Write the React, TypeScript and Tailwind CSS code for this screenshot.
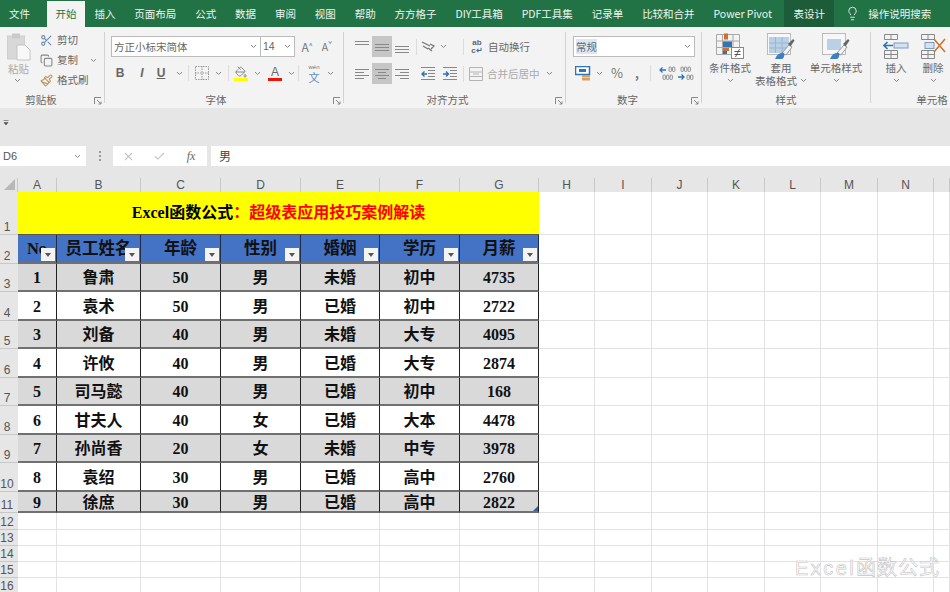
import React from 'react';
import { Scissors, Copy, Paintbrush, PaintBucket, Lightbulb, Check, X } from 'lucide-react';

const cjk = '"Noto Sans CJK SC", "Liberation Sans", sans-serif';
const serif = '"Liberation Serif", "Noto Sans CJK SC", serif';
const sans = '"Liberation Sans", sans-serif';

const tabs = ['插入', '页面布局', '公式', '数据', '审阅', '视图', '帮助', '方方格子', 'DIY工具箱', 'PDF工具集', '记录单', '比较和合并', 'Power Pivot'];

const colWidths = [39, 84, 80, 80, 79, 80, 79, 56, 57, 56, 57, 56, 57, 56, 16];
const colNames = ['A', 'B', 'C', 'D', 'E', 'F', 'G', 'H', 'I', 'J', 'K', 'L', 'M', 'N', ''];
const rowHeights = [43, 29, 28, 29, 28, 29, 28, 29, 28, 29, 21, 17, 16, 16, 16, 16];

const headers = ['No', '员工姓名', '年龄', '性别', '婚姻', '学历', '月薪'];
const people = [
  ['1', '鲁肃', '50', '男', '未婚', '初中', '4735'],
  ['2', '袁术', '50', '男', '已婚', '初中', '2722'],
  ['3', '刘备', '40', '男', '未婚', '大专', '4095'],
  ['4', '许攸', '40', '男', '已婚', '大专', '2874'],
  ['5', '司马懿', '40', '男', '已婚', '初中', '168'],
  ['6', '甘夫人', '40', '女', '已婚', '大本', '4478'],
  ['7', '孙尚香', '20', '女', '未婚', '中专', '3978'],
  ['8', '袁绍', '30', '男', '已婚', '高中', '2760'],
  ['9', '徐庶', '30', '男', '已婚', '高中', '2822'],
];

const Chev = ({ className = '' }: { className?: string }) => (
  <svg width="7" height="5" viewBox="0 0 7 5" className={className}>
    <path d="M1 1l2.5 2.5L6 1" fill="none" stroke="#888" strokeWidth="1" />
  </svg>
);

const Launcher = () => (
  <svg width="8" height="8" viewBox="0 0 8 8" className="shrink-0">
    <path d="M0.5 7V0.5H7M3 3l4 4M7 4.5V7H4.5" fill="none" stroke="#888" strokeWidth="1" />
  </svg>
);

// three or four short rules used by the alignment buttons
const Lines = ({ rows, y = 2, gap = 3 }: { rows: number[][]; y?: number; gap?: number }) => (
  <svg width="14" height="14" viewBox="0 0 14 14">
    {rows.map((r, i) => (
      <line key={i} x1={r[0]} x2={r[1]} y1={y + i * gap + 0.5} y2={y + i * gap + 0.5} stroke="#888" strokeWidth="1" />
    ))}
  </svg>
);

const Indent = ({ flip }: { flip?: boolean }) => (
  <svg width="14" height="14" viewBox="0 0 14 14">
    {[1, 4, 7, 10, 13].map(y => (
      <line key={y} x1={y === 1 || y === 13 ? 0 : 7} x2="14" y1={y - 0.5} y2={y - 0.5} stroke="#888" strokeWidth="1" />
    ))}
    <path d={flip ? 'M0 7h5M3 4.5L5.5 7 3 9.5' : 'M6 7H1M3.5 4.5L1 7l2.5 2.5'} fill="none" stroke="#2f6fb5" strokeWidth="1.4" />
  </svg>
);

const Group = ({ width, label, launcher, labelClass = '', children }: { width: string; label: string; launcher?: boolean; labelClass?: string; children: React.ReactNode }) => (
  <div className={`${width} shrink-0 flex flex-col`}>
    <div className="h-[66px] overflow-hidden">{children}</div>
    <div className="h-[15px] flex items-center">
      <span className={`flex-1 text-center text-[#666] text-[10.5px] leading-none ${labelClass}`}>{label}</span>
      {launcher && <span className="w-[14px] flex justify-end pr-[2px]"><Launcher /></span>}
    </div>
  </div>
);

const Divider = () => <div className="w-px my-[5px] bg-[#d2d2d2] shrink-0" />;

const Sep = ({ className = '' }: { className?: string }) => <div className={`w-px h-[16px] bg-[#dcdcdc] shrink-0 ${className}`} />;

const Slot = ({ w, children, className = '' }: { w: string; children?: React.ReactNode; className?: string }) => (
  <div className={`${w} shrink-0 flex items-center justify-center ${className}`}>{children}</div>
);

const Clipboard = () => (
  <svg width="25" height="28" viewBox="0 0 25 28">
    <rect x="0.5" y="3" width="17" height="23" fill="#d8d8d8" stroke="#cfcfcf" />
    <rect x="5" y="0.5" width="8" height="5" fill="#c9c9c9" />
    <path d="M10 12h8l5 5v10H10z" fill="#f8f8f8" stroke="#c4c4c4" />
  </svg>
);

const Borders = () => (
  <svg width="14" height="14" viewBox="0 0 14 14">
    <path d="M0.5 0.5h13v13h-13zM7 0v14M0 7h14" fill="none" stroke="#999" strokeWidth="1" strokeDasharray="1.5 1" />
  </svg>
);

const CondFormat = () => (
  <svg width="28" height="26" viewBox="0 0 28 26">
    <path d="M0.5 1.5h23v20h-23zM6.5 1.5v20M17 1.5v20M0.5 8h23M0.5 14.5h23" fill="none" stroke="#a8a8a8" />
    <rect x="8" y="0.5" width="4" height="6" fill="#d0702c" />
    <rect x="7" y="8.5" width="9" height="5.5" fill="#2f75b5" />
    <rect x="7" y="15" width="6" height="3" fill="#d0702c" />
    <rect x="7" y="18" width="4" height="3" fill="#2f75b5" />
    <rect x="15.5" y="14.5" width="12" height="11" fill="#fff" stroke="#888" />
    <path d="M18.5 18.5h6M18.5 21.5h6M23.5 16l-4 8" fill="none" stroke="#555" />
  </svg>
);

const TableStyle = ({ light }: { light?: boolean }) => (
  <svg width="28" height="26" viewBox="0 0 28 26">
    <rect x="0.5" y="0.5" width="23" height="21" fill="#f7f7f7" stroke="#bbb" />
    <rect x={light ? 5 : 2} y={light ? 6 : 4} width={light ? 14 : 20} height={light ? 11 : 16} fill="#b9d0e6" />
    {!light && <path d="M8.5 4v16M15 4v16M2 10h20M2 15h20" stroke="#9ab6cf" />}
    <path d="M15 20l7-8 3 2-6 8z" fill="#f4f4f4" stroke="#999" />
    <path d="M21 11l5-5 1.5 1.5-4 6z" fill="#666" />
    <path d="M8 26c2-5 6-7 9-6 1 3-1 6-2 6z" fill="#3b7fc4" />
  </svg>
);

const InsertCells = () => (
  <svg width="26" height="26" viewBox="0 0 26 26">
    <path d="M1.5 1.5h13v5h-13zM8 1.5v5M1.5 17.5h13v8h-13zM8 17.5v8M1.5 21.5h13" fill="none" stroke="#888" />
    <rect x="11" y="10" width="14" height="5" fill="#d4e2f0" stroke="#7b9cc0" />
    <path d="M10 12.5H1M4.5 9L1 12.5 4.5 16" fill="none" stroke="#2f75b5" strokeWidth="1.6" />
  </svg>
);

const DeleteCells = () => (
  <svg width="26" height="26" viewBox="0 0 26 26">
    <path d="M1.5 1.5h13v5h-13zM8 1.5v5M1.5 17.5h13v8h-13zM8 17.5v8M1.5 21.5h13" fill="none" stroke="#888" />
    <rect x="5" y="9.5" width="9" height="6" fill="#d4e2f0" stroke="#7b9cc0" />
    <path d="M14 6l11 13M25 6L14 19" fill="none" stroke="#d0702c" strokeWidth="1.5" />
  </svg>
);

const Currency = () => (
  <svg width="16" height="15" viewBox="0 0 16 15">
    <rect x="0.5" y="0.5" width="14" height="8" fill="#fff" stroke="#2f75b5" strokeWidth="1.5" />
    <rect x="4" y="3" width="7" height="3" fill="#2f75b5" />
    <rect x="7" y="9" width="8" height="2.5" fill="#d9a066" />
    <rect x="7" y="12" width="8" height="2.5" fill="#d9a066" />
  </svg>
);

const DecimalIcon = ({ more }: { more?: boolean }) => (
  <svg width="18" height="15" viewBox="0 0 18 15" fill="none">
    {more ? (
      <path d="M1 4h6M3.5 1.5L1 4l2.5 2.5" stroke="#2f75b5" strokeWidth="1.3" />
    ) : (
      <path d="M1 11h6M4.5 8.5L7 11l-2.5 2.5" stroke="#2f75b5" strokeWidth="1.3" />
    )}
    {(more ? [[10, 1], [13.5, 1], [4, 9], [7.5, 9], [11, 9]] : [[4, 1], [7.5, 1], [11, 1], [10, 9], [13.5, 9]]).map(([x, y], i) => (
      <rect key={i} x={x} y={y} width="2.4" height="4.5" rx="1" stroke="#777" strokeWidth="0.8" />
    ))}
  </svg>
);

const BigButton = ({ w, icon, lines }: { w: string; icon: React.ReactNode; lines: React.ReactNode }) => (
  <div className={`${w} shrink-0 flex flex-col items-center pt-[6px]`}>
    <div className="h-[26px] flex items-center">{icon}</div>
    <div className="mt-[2px] flex flex-col items-center leading-[13px] whitespace-nowrap">{lines}</div>
  </div>
);

const FilterButton = () => (
  <span className="absolute right-[1px] bottom-[1px] w-[14px] h-[13px] bg-[#f4f4f4] flex items-center justify-center">
    <svg width="6" height="4" viewBox="0 0 6 4"><path d="M0 0h6L3 4z" fill="#555" /></svg>
  </span>
);

const Ribbon = () => (
  <div className="h-[81px] bg-[#f3f3f3] flex text-[#666] text-[10.5px] overflow-hidden">
    <Group width="w-[104px]" label="剪贴板" launcher labelClass="pr-[8px]">
      <div className="flex">
        <div className="w-[40px] pl-[7px] pt-[6px] flex flex-col items-start text-[#aaa]">
          <Clipboard />
          <span className="mt-[1px] pl-[1px] leading-[13px]">粘贴</span>
          <Chev className="ml-[7px] mt-[3px]" />
        </div>
        <div className="flex flex-col pt-[3px]">
          <div className="h-[20px] flex items-center gap-[4px]"><Scissors size={13} className="text-[#6a8bb0]" /><span>剪切</span></div>
          <div className="h-[20px] flex items-center gap-[4px]"><Copy size={13} className="text-[#888]" /><span>复制</span><Chev className="ml-[8px]" /></div>
          <div className="h-[20px] flex items-center gap-[4px]"><Paintbrush size={13} className="text-[#b9975f]" /><span>格式刷</span></div>
        </div>
      </div>
    </Group>
    <Divider />
    <Group width="w-[238px]" label="字体" launcher labelClass="pr-[2px]">
      <div className="flex items-center pt-[9px] pl-[6px]">
        <div className="w-[150px] h-[21px] bg-white border border-[#bbb] flex items-center justify-between pl-[2px] pr-[3px]">
          <span>方正小标宋简体</span><Chev />
        </div>
        <div className="w-[34px] h-[21px] bg-white border border-[#bbb] border-l-0 flex items-center justify-between pl-[2px] pr-[3px]" style={{ fontFamily: sans }}>
          <span>14</span><Chev />
        </div>
        <Slot w="w-[20px]" className="ml-[2px] text-[12px] text-[#777]"><span>A<sup className="text-[#2f75b5] text-[7px]">^</sup></span></Slot>
        <Slot w="w-[20px]" className="text-[10.5px] text-[#777]"><span>A<sup className="text-[#2f75b5] text-[7px]">ˇ</sup></span></Slot>
      </div>
      <div className="flex items-center mt-[6px] h-[20px] text-[#666]" style={{ fontFamily: sans }}>
        <Slot w="w-[26px]" className="ml-[2px] font-bold text-[12px]">B</Slot>
        <Slot w="w-[18px]" className="italic font-bold text-[12px]">I</Slot>
        <Slot w="w-[20px]" className="underline font-bold text-[12px]">U</Slot>
        <Slot w="w-[14px]" className="ml-[1px]"><Chev /></Slot>
        <Sep className="ml-[2px]" />
        <Slot w="w-[24px]" className="ml-[1px]"><Borders /></Slot>
        <Slot w="w-[8px]"><Chev /></Slot>
        <Sep className="ml-[6px]" />
        <Slot w="w-[24px]" className="flex-col">
          <PaintBucket size={12} className="text-[#888]" />
          <span className="w-[14px] h-[3px] bg-[#ffff00]" />
        </Slot>
        <Slot w="w-[8px]"><Chev /></Slot>
        <Slot w="w-[20px]" className="ml-[4px] flex-col">
          <span className="text-[12px] leading-[12px]">A</span>
          <span className="w-[14px] h-[3px] bg-[#f01400]" />
        </Slot>
        <Slot w="w-[12px]"><Chev /></Slot>
        <Sep className="ml-[1px]" />
        <Slot w="w-[24px]" className="ml-[3px] flex-col text-[#5b8fc4]">
          <span className="text-[6px] leading-[7px] text-[#777]">wén</span>
          <span className="text-[11px] leading-[12px]" style={{ fontFamily: cjk }}>文</span>
        </Slot>
        <Slot w="w-[8px]"><Chev /></Slot>
      </div>
    </Group>
    <Divider />
    <Group width="w-[221px]" label="对齐方式" launcher>
      <div className="flex items-center pt-[9px] pl-[8px] whitespace-nowrap">
        <Slot w="w-[20px]"><Lines rows={[[0, 14], [0, 14]]} y={1} /></Slot>
        <Slot w="w-[20px]" className="h-[21px] bg-[#c6c6c6]"><Lines rows={[[0, 14], [0, 14], [0, 14]]} y={4} /></Slot>
        <Slot w="w-[20px]"><Lines rows={[[0, 14], [0, 14], [0, 14]]} y={6} /></Slot>
        <Sep className="ml-[4px]" />
        <Slot w="w-[22px]">
          <svg width="15" height="13" viewBox="0 0 15 13"><path d="M1 2l8 4M2 6l5 3M9 4l4 2-3 3M11 11L7 8" fill="none" stroke="#777" strokeWidth="1.3" /></svg>
        </Slot>
        <Slot w="w-[8px]"><Chev /></Slot>
        <Sep className="ml-[16px]" />
        <Slot w="w-[22px]" className="ml-[2px] text-[8px] leading-[8px] font-bold">
          <span className="text-center" style={{ fontFamily: sans }}>ab<br />c<span className="text-[#2f75b5]">↵</span></span>
        </Slot>
        <span>自动换行</span>
      </div>
      <div className="flex items-center mt-[6px] pl-[8px] whitespace-nowrap">
        <Slot w="w-[20px]"><Lines rows={[[0, 14], [0, 9], [0, 14], [0, 9]]} /></Slot>
        <Slot w="w-[20px]" className="h-[21px] bg-[#c6c6c6]"><Lines rows={[[0, 14], [3, 11], [0, 14], [3, 11]]} /></Slot>
        <Slot w="w-[20px]"><Lines rows={[[0, 14], [5, 14], [0, 14], [5, 14]]} /></Slot>
        <Slot w="w-[22px]" className="ml-[5px]"><Indent /></Slot>
        <Slot w="w-[22px]"><Indent flip /></Slot>
        <Sep className="ml-[2px]" />
        <Slot w="w-[20px]" className="ml-[2px]">
          <svg width="14" height="14" viewBox="0 0 14 14"><path d="M0.5 0.5h13v13h-13zM0.5 5h13M0.5 9.5h13M4 7h6" fill="none" stroke="#b4b4b4" /></svg>
        </Slot>
        <span className="text-[#aaa] ml-[1px]">合并后居中</span>
        <Slot w="w-[20px]"><Chev /></Slot>
      </div>
    </Group>
    <Divider />
    <Group width="w-[135px]" label="数字" launcher labelClass="pl-[2px]">
      <div className="pt-[9px] pl-[7px]">
        <div className="w-[122px] h-[21px] bg-white border border-[#bbb] flex items-center justify-between pl-[2px] pr-[3px]">
          <span className="bg-[#dbe7f4]">常规</span><Chev />
        </div>
      </div>
      <div className="flex items-center mt-[6px] pl-[8px] h-[20px]">
        <Slot w="w-[18px]"><Currency /></Slot>
        <Slot w="w-[14px]"><Chev /></Slot>
        <Slot w="w-[22px]" className="text-[13px] text-[#777]">%</Slot>
        <Slot w="w-[18px]" className="font-bold text-[12px] text-[#777]">,</Slot>
        <Sep className="ml-[4px]" />
        <Slot w="w-[18px]" className="ml-[8px]"><DecimalIcon more /></Slot>
        <Slot w="w-[18px]"><DecimalIcon /></Slot>
      </div>
    </Group>
    <Divider />
    <Group width="w-[168px]" label="样式">
      <div className="flex">
        <BigButton w="w-[56px]" icon={<CondFormat />} lines={<><span>条件格式</span><Chev className="mt-[4px]" /></>} />
        <BigButton w="w-[46px]" icon={<TableStyle />} lines={<><span>套用</span><span className="flex items-center gap-[3px]">表格格式<Chev /></span></>} />
        <BigButton w="w-[64px]" icon={<TableStyle light />} lines={<><span>单元格样式</span><Chev className="mt-[4px]" /></>} />
      </div>
    </Group>
    <Divider />
    <Group width="w-[122px]" label="单元格">
      <div className="flex pl-[6px]">
        <BigButton w="w-[38px]" icon={<InsertCells />} lines={<><span>插入</span><Chev className="mt-[4px]" /></>} />
        <BigButton w="w-[36px]" icon={<DeleteCells />} lines={<><span>删除</span><Chev className="mt-[4px]" /></>} />
      </div>
    </Group>
  </div>
);

const FormulaBar = () => (
  <div className="h-[70px] bg-[#e6e6e6] flex flex-col">
    <div className="h-[30px] mb-[8px] pl-[3px] flex items-center">
      <svg width="6" height="6" viewBox="0 0 6 6"><path d="M0.5 0.5h5M1 2.5h4L3 5z" fill="#555" stroke="#555" strokeWidth="0.6" /></svg>
    </div>
    <div className="h-[20px] flex items-stretch text-[11px] text-[#555]">
      <div className="w-[86px] bg-white flex items-center justify-between pl-[3px] pr-[5px]" style={{ fontFamily: sans }}>
        <span>D6</span><Chev />
      </div>
      <div className="w-[27px] flex flex-col items-center justify-center gap-[2px]">
        <span className="w-[2px] h-[2px] bg-[#999]" /><span className="w-[2px] h-[2px] bg-[#999]" /><span className="w-[2px] h-[2px] bg-[#999]" />
      </div>
      <div className="w-[94px] bg-white flex items-center">
        <Slot w="w-[30px]"><X size={13} className="text-[#c4c4c4]" /></Slot>
        <Slot w="w-[32px]"><Check size={13} className="text-[#c4c4c4]" /></Slot>
        <Slot w="w-[32px]" className="italic text-[#666] text-[12px]"><span style={{ fontFamily: serif }}>fx</span></Slot>
      </div>
      <div className="ml-[4px] flex-1 bg-white flex items-center pl-[8px] text-[12px] text-[#444]">男</div>
    </div>
  </div>
);

const Sheet = () => (
  <div
    className="grid bg-white"
    style={{
      gridTemplateColumns: `18px ${colWidths.map(w => `${w}px`).join(' ')}`,
      gridTemplateRows: `14px ${rowHeights.map(h => `${h}px`).join(' ')}`,
    }}
  >
    <div className="bg-[#e6e6e6] flex items-end justify-end pr-[2px] pb-[2px] border-r border-[#c8c8c8]">
      <svg width="11" height="11" viewBox="0 0 11 11"><path d="M11 0v11H0z" fill="#b8b8b8" /></svg>
    </div>
    {colNames.map((c, i) => (
      <div key={i} className="bg-[#e6e6e6] border-r border-[#c8c8c8] flex items-center justify-center text-[12px] text-[#555] leading-none" style={{ fontFamily: sans }}>{c}</div>
    ))}
    {rowHeights.map((_, r) => (
      <React.Fragment key={r}>
        <div style={{ gridColumn: 1, gridRow: r + 2, fontFamily: sans }} className="bg-[#e6e6e6] border-b border-[#c8c8c8] flex items-end justify-center pr-[4px] text-[12px] text-[#555] leading-[13px] overflow-hidden">{r + 1}</div>
        {colWidths.map((_, c) =>
          (r > 10 || c > 6) ? (
            <div key={c} style={{ gridColumn: c + 2, gridRow: r + 2 }} className="border-r border-b border-[#e2e2e2]" />
          ) : null
        )}
      </React.Fragment>
    ))}
    <div className="col-start-2 col-span-7 row-start-2 bg-[#ffff00] border-b border-[#555] flex items-center justify-center text-[16px] font-bold leading-none" style={{ fontFamily: serif }}>
      <span className="text-black">Excel函数公式</span>
      <span className="text-[#ff0000]">：超级表应用技巧案例解读</span>
    </div>
    {headers.map((h, c) => (
      <div key={h} style={{ gridColumn: c + 2, gridRow: 3, fontFamily: serif }} className="relative bg-[#4472c4] border-r border-[#1f2f4a] border-b-2 border-b-[#707070] pt-[1px] flex items-center justify-center text-[16.5px] font-bold text-[#111] overflow-hidden whitespace-nowrap">
        <span>{h}</span>
        <FilterButton />
      </div>
    ))}
    {people.map((row, r) =>
      row.map((v, c) => (
        <div
          key={c}
          style={{ gridColumn: c + 2, gridRow: r + 4, fontFamily: serif }}
          className={`relative border-r border-[#222] border-b-2 border-b-[#707070] pt-[2px] flex items-center justify-center text-[16px] font-bold text-[#111] leading-none ${r % 2 === 0 ? 'bg-[#d9d9d9]' : 'bg-white'}`}
        >
          {v}
          {r === 8 && c === 6 && <span className="absolute right-0 bottom-0 w-0 h-0 border-l-[5px] border-l-transparent border-b-[5px] border-b-[#2f5fa8]" />}
        </div>
      ))
    )}
  </div>
);

export default function App() {
  return (
    <div className="relative w-[950px] h-[592px] overflow-hidden bg-white" style={{ fontFamily: cjk }}>
      <div className="h-[27px] bg-[#217346] flex items-stretch text-[10.5px] text-[#eef5f0] whitespace-nowrap">
        <div className="px-[9px] flex items-center">文件</div>
        <div className="ml-[8px] mt-[1px] w-[38px] bg-[#f3f3f3] text-[#217346] flex items-center justify-center">开始</div>
        {tabs.map(t => (
          <div key={t} className="px-[9.45px] flex items-center">{t}</div>
        ))}
        <div className="ml-[3px] w-[50px] bg-[#1c5c39] flex items-center justify-center">表设计</div>
        <div className="ml-[11px] flex items-center gap-[8px]">
          <Lightbulb size={15} strokeWidth={1.4} />
          <span>操作说明搜索</span>
        </div>
      </div>
      <Ribbon />
      <FormulaBar />
      <Sheet />
      <span
        className="absolute right-[10px] bottom-[14px] text-[20px] leading-none text-white tracking-[1px] [-webkit-text-stroke:0.6px_#c4c4c4]"
        style={{ fontFamily: '"Liberation Sans", "Noto Sans CJK SC", sans-serif' }}
      >
        <span className="tracking-[2.4px]">Excel</span>函数公式
      </span>
    </div>
  );
}
